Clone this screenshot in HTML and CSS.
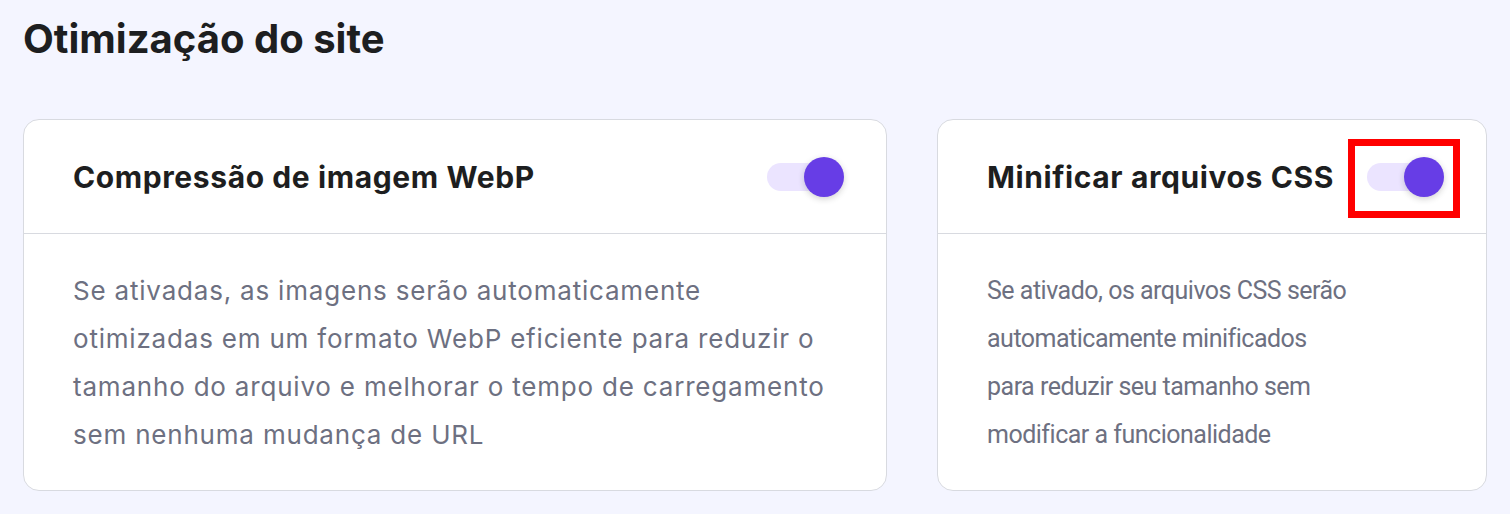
FILE: index.html
```html
<!DOCTYPE html>
<html lang="pt-BR">
<head>
<meta charset="utf-8">
<title>Otimização do site</title>
<link rel="stylesheet" href="styles.css">
</head>
<body>
<main class="page">
  <h1 class="page-title">Otimização do site</h1>
  <div class="cards">
    <section class="card">
      <header class="card-head">
        <h2 class="card-title">Compressão de imagem WebP</h2>
        <span class="toggle"><span class="toggle-track"></span><span class="toggle-knob"></span></span>
      </header>
      <p class="card-body">Se ativadas, as imagens serão automaticamente<br>otimizadas em um formato WebP eficiente para reduzir o<br>tamanho do arquivo e melhorar o tempo de carregamento<br>sem nenhuma mudança de URL</p>
    </section>
    <section class="card">
      <header class="card-head">
        <h2 class="card-title">Minificar arquivos CSS</h2>
        <span class="toggle"><span class="toggle-track"></span><span class="toggle-knob"></span><span class="highlight"></span></span>
      </header>
      <p class="card-body alt">Se ativado, os arquivos CSS serão<br>automaticamente minificados<br>para reduzir seu tamanho sem<br>modificar a funcionalidade</p>
    </section>
  </div>
</main>
</body>
</html>
```
FILE: styles.css
```css
html, body {
  margin: 0;
  padding: 0;
  background: #f4f5ff;
}
body {
  font-family: Inter, "Open Sans", "Liberation Sans", sans-serif;
  color: #1d1e20;
}
.page {
  padding: 15px 23px 0;
}
.page-title {
  margin: 0;
  font-size: 40px;
  line-height: 48px;
  font-weight: 700;
  letter-spacing: 0;
}
.cards {
  margin-top: 56px;
  display: grid;
  grid-template-columns: minmax(0, 864fr) minmax(0, 550fr);
  gap: 50px;
}
.card {
  background: #fff;
  border: 1px solid #d8dae0;
  border-radius: 16px;
}
.card-head {
  height: 113px;
  border-bottom: 1px solid #d8dae0;
  display: flex;
  align-items: center;
  justify-content: space-between;
  padding: 0 42px 0 49px;
}
.card-title {
  margin: 0;
  font-size: 30px;
  font-weight: 700;
  letter-spacing: 0.6px;
}
.toggle {
  position: relative;
  width: 77px;
  height: 40px;
  flex: none;
}
.toggle-track {
  position: absolute;
  left: 0;
  top: 6px;
  width: 68px;
  height: 28px;
  border-radius: 14px;
  background: #ebe4ff;
}
.toggle-knob {
  position: absolute;
  right: 0;
  top: 0;
  width: 40px;
  height: 40px;
  border-radius: 50%;
  background: #673de6;
  box-shadow: 0 2px 6px rgba(29, 30, 32, 0.2);
}
.highlight {
  position: absolute;
  left: -19px;
  right: -16px;
  top: -18px;
  bottom: -21px;
  border: 7px solid #ff0000;
}
.card-body {
  margin: 0;
  padding: 33px 49px 31px;
  font-size: 26px;
  line-height: 48px;
  letter-spacing: 0.8px;
  color: #6d7081;
}
.card-body.alt {
  font-family: Roboto, "Liberation Sans", sans-serif;
  font-size: 25px;
  letter-spacing: -0.5px;
}
```
